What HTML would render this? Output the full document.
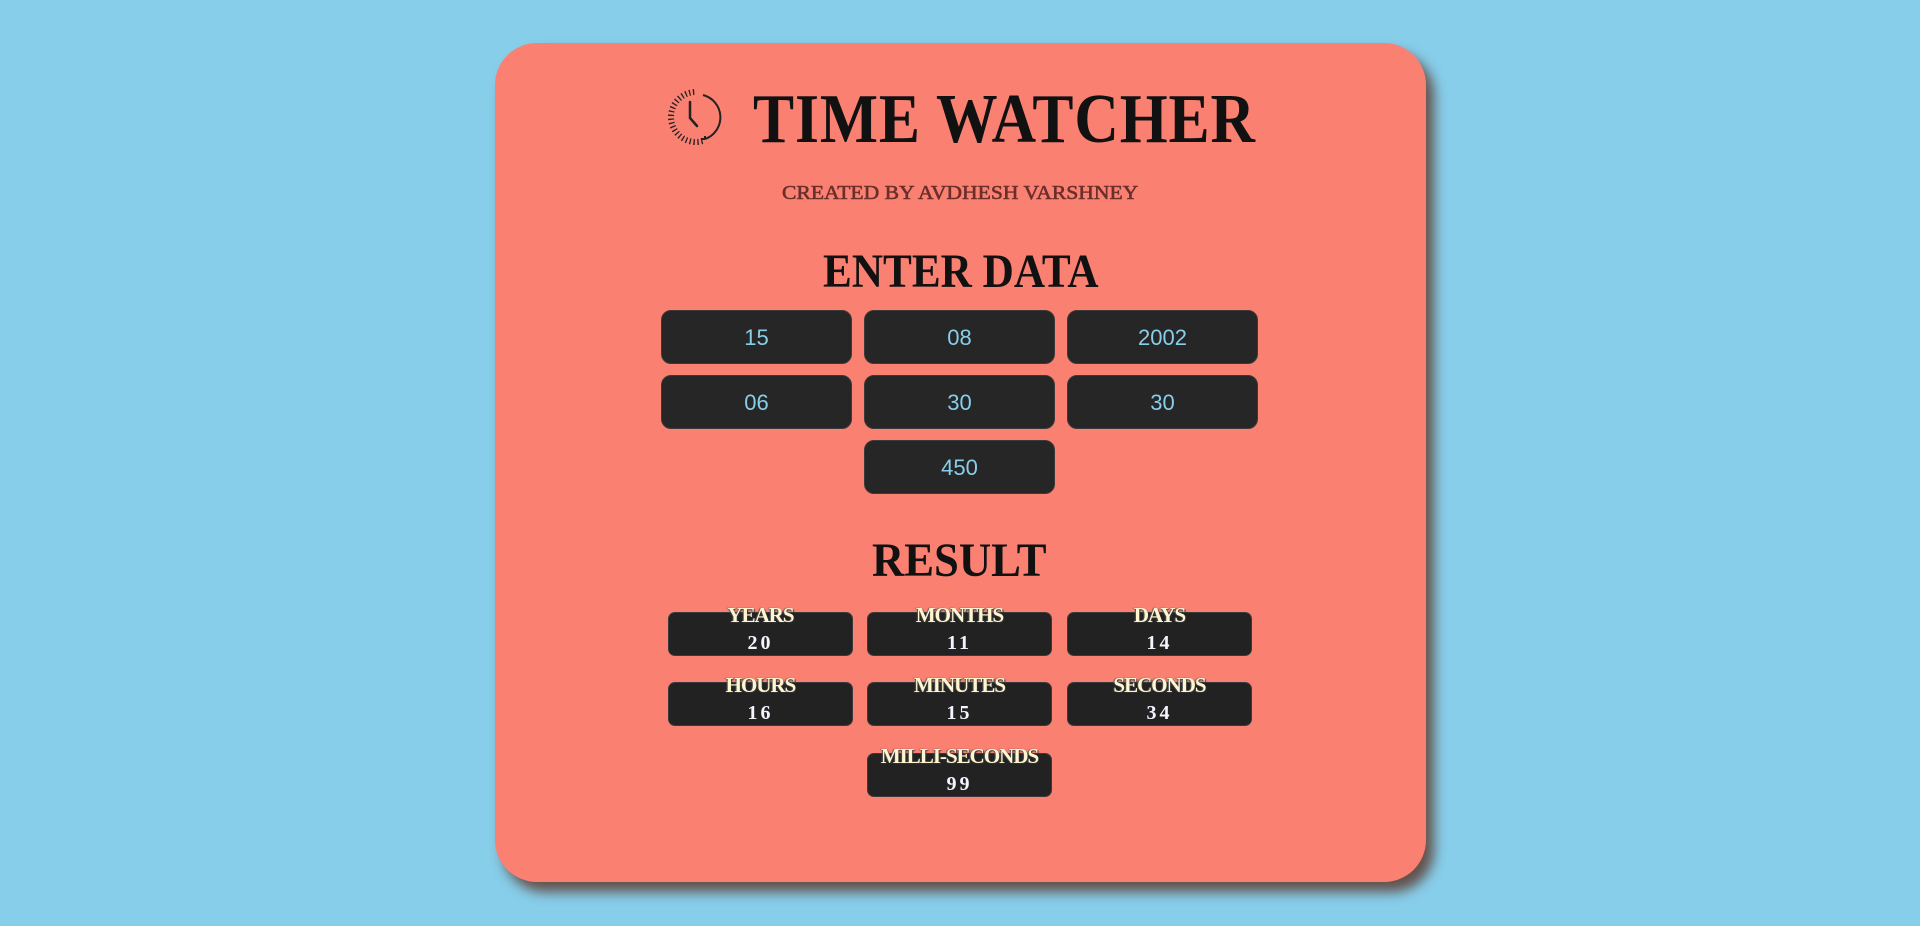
<!DOCTYPE html>
<html><head><style>
html,body{margin:0;padding:0;width:1920px;height:926px;background:#87CEEB;overflow:hidden}
.card{position:absolute;left:495px;top:43px;width:931px;height:839px;background:#FA8072;border-radius:42px;box-shadow:8px 10px 12px rgba(90,50,35,.8)}
.serif{font-family:"Liberation Serif",serif;font-weight:bold;position:absolute;white-space:nowrap}
.inp{position:absolute;width:191px;height:54px;background:#262626;border:1px solid #3a3a3a;border-radius:10px;color:#87CEEB;font:22px "Liberation Sans",sans-serif;text-align:center;line-height:54px;box-sizing:border-box}
.res{position:absolute;width:185px;height:44px;background:#222;border:1px solid #3a3a3a;border-radius:7px;box-sizing:border-box}
.lab{position:absolute;left:0;right:0;top:-10px;text-align:center;font:bold 21px "Liberation Serif",serif;color:#fff6d0;text-shadow:1px 1px 1px #333,-1px 0 1px #555;letter-spacing:-1px}
.num{position:absolute;left:0;right:0;top:19px;text-align:center;font:bold 20px "Liberation Serif",serif;color:#f4f4ff;letter-spacing:3px}
</style></head><body>
<div class="card"></div>
<svg style="position:absolute;left:667px;top:88px" width="58" height="58" viewBox="0 0 58 58">
<circle cx="29" cy="29" r="25" fill="none" stroke="#222" stroke-width="6" stroke-dasharray="1.3 2.6 1.3 2.6 1.3 2.6 1.3 2.6 1.3 2.6 1.3 2.6 1.3 2.6 1.3 2.6 1.3 2.6 1.3 2.6 1.3 2.6 1.3 2.6 1.3 2.6 1.3 2.6 1.3 2.6 1.3 2.6 1.3 2.6 1.3 2.6 1.3 2.6 1.3 2.6 1.3 2.6 1.3 200" transform="rotate(75 29 29)"/>
<path d="M36 7 A23 23 0 0 1 38 51" fill="none" stroke="#222" stroke-width="2"/>
<path d="M38 51 l-4 0 M38 51 l0 -3" stroke="#222" stroke-width="2" fill="none"/>
<path d="M23 14 L23 30 L30 38" fill="none" stroke="#222" stroke-width="2.5" stroke-linecap="round"/>
</svg>
<div class="serif" style="left:753px;top:80px;font-size:70px;color:#111;transform-origin:left top;transform:scaleX(0.88);letter-spacing:1px">TIME WATCHER</div>
<div class="serif" style="left:782px;top:182px;font-size:20px;color:#6b2f2b;transform-origin:left top;transform:scaleX(1.08);font-weight:normal;-webkit-text-stroke:0.6px #6b2f2b">CREATED BY AVDHESH VARSHNEY</div>
<div class="serif" style="left:823px;top:244px;font-size:48px;color:#111;transform-origin:left top;transform:scaleX(0.9)">ENTER DATA</div>
<div class="inp" style="left:661px;top:310px">15</div>
<div class="inp" style="left:864px;top:310px">08</div>
<div class="inp" style="left:1067px;top:310px">2002</div>
<div class="inp" style="left:661px;top:375px">06</div>
<div class="inp" style="left:864px;top:375px">30</div>
<div class="inp" style="left:1067px;top:375px">30</div>
<div class="inp" style="left:864px;top:440px">450</div>
<div class="serif" style="left:872px;top:533px;font-size:48px;color:#111;transform-origin:left top;transform:scaleX(0.93)">RESULT</div>
<div class="res" style="left:668px;top:612px"><div class="lab">YEARS</div><div class="num">20</div></div>
<div class="res" style="left:867px;top:612px"><div class="lab">MONTHS</div><div class="num">11</div></div>
<div class="res" style="left:1067px;top:612px"><div class="lab">DAYS</div><div class="num">14</div></div>
<div class="res" style="left:668px;top:682px"><div class="lab">HOURS</div><div class="num">16</div></div>
<div class="res" style="left:867px;top:682px"><div class="lab">MINUTES</div><div class="num">15</div></div>
<div class="res" style="left:1067px;top:682px"><div class="lab">SECONDS</div><div class="num">34</div></div>
<div class="res" style="left:867px;top:753px"><div class="lab">MILLI-SECONDS</div><div class="num">99</div></div>
</body></html>
